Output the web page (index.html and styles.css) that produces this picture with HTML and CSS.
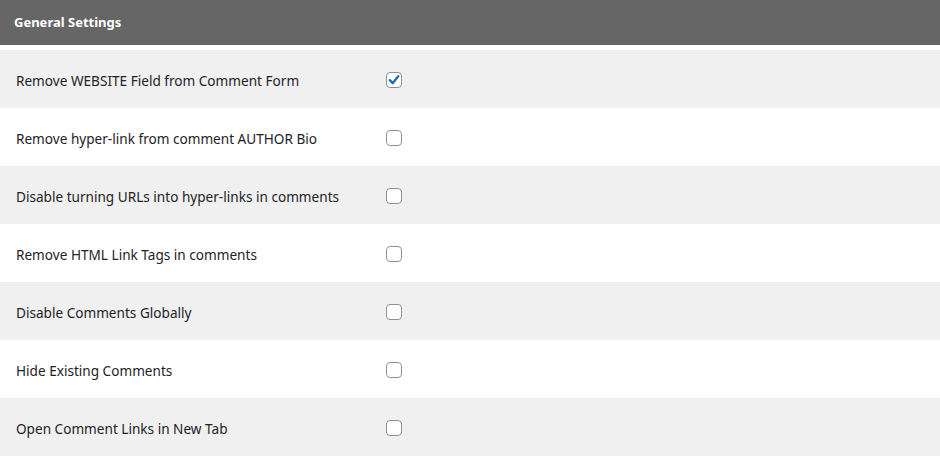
FILE: index.html
```html
<!DOCTYPE html>
<html>
<head>
<meta charset="utf-8">
<link rel="stylesheet" href="styles.css">
</head>
<body>
<div class="panel">
  <div class="panel-head">General Settings</div>
  <div class="rows">
    <div class="row"><span class="label">Remove WEBSITE Field from Comment Form</span><span class="cb checked"><svg viewBox="0 0 16 16" width="16" height="16"><path d="M3.2 8.2 L6.5 11.6 L12.8 3.8" fill="none" stroke="#2271b1" stroke-width="2.8" stroke-linecap="round" stroke-linejoin="round"/></svg></span></div>
    <div class="row"><span class="label">Remove hyper-link from comment AUTHOR Bio</span><span class="cb"></span></div>
    <div class="row"><span class="label">Disable turning URLs into hyper-links in comments</span><span class="cb"></span></div>
    <div class="row"><span class="label">Remove HTML Link Tags in comments</span><span class="cb"></span></div>
    <div class="row"><span class="label">Disable Comments Globally</span><span class="cb"></span></div>
    <div class="row"><span class="label">Hide Existing Comments</span><span class="cb"></span></div>
    <div class="row"><span class="label">Open Comment Links in New Tab</span><span class="cb"></span></div>
  </div>
</div>
</body>
</html>
```
FILE: styles.css
```css
html, body { margin: 0; padding: 0; background: #fff; }
body { font-family: "Noto Sans", "Open Sans", sans-serif; color: #1d2327; }
.panel { width: 940px; }
.panel-head {
  height: 45px;
  background: #666666;
  color: #fff;
  font-weight: 700;
  font-size: 13px;
  padding-left: 14px;
  display: flex;
  align-items: center;
  box-sizing: border-box;
  padding-bottom: 1px;
}
.rows { margin-top: 5px; }
.row {
  height: 58px;
  display: flex;
  align-items: center;
  padding-left: 16px;
  box-sizing: border-box;
}
.row:nth-child(odd) { background: #f0f0f0; }
.label {
  width: 370px;
  font-size: 13.6px;
  font-weight: 400;
  padding-top: 3px;
}
.cb {
  width: 16px;
  height: 16px;
  box-sizing: border-box;
  border: 1px solid #8c8f94;
  border-radius: 4px;
  background: #fff;
  display: flex;
  align-items: center;
  justify-content: center;
  margin-top: 2px;
}
.cb svg { display: block; }
```
